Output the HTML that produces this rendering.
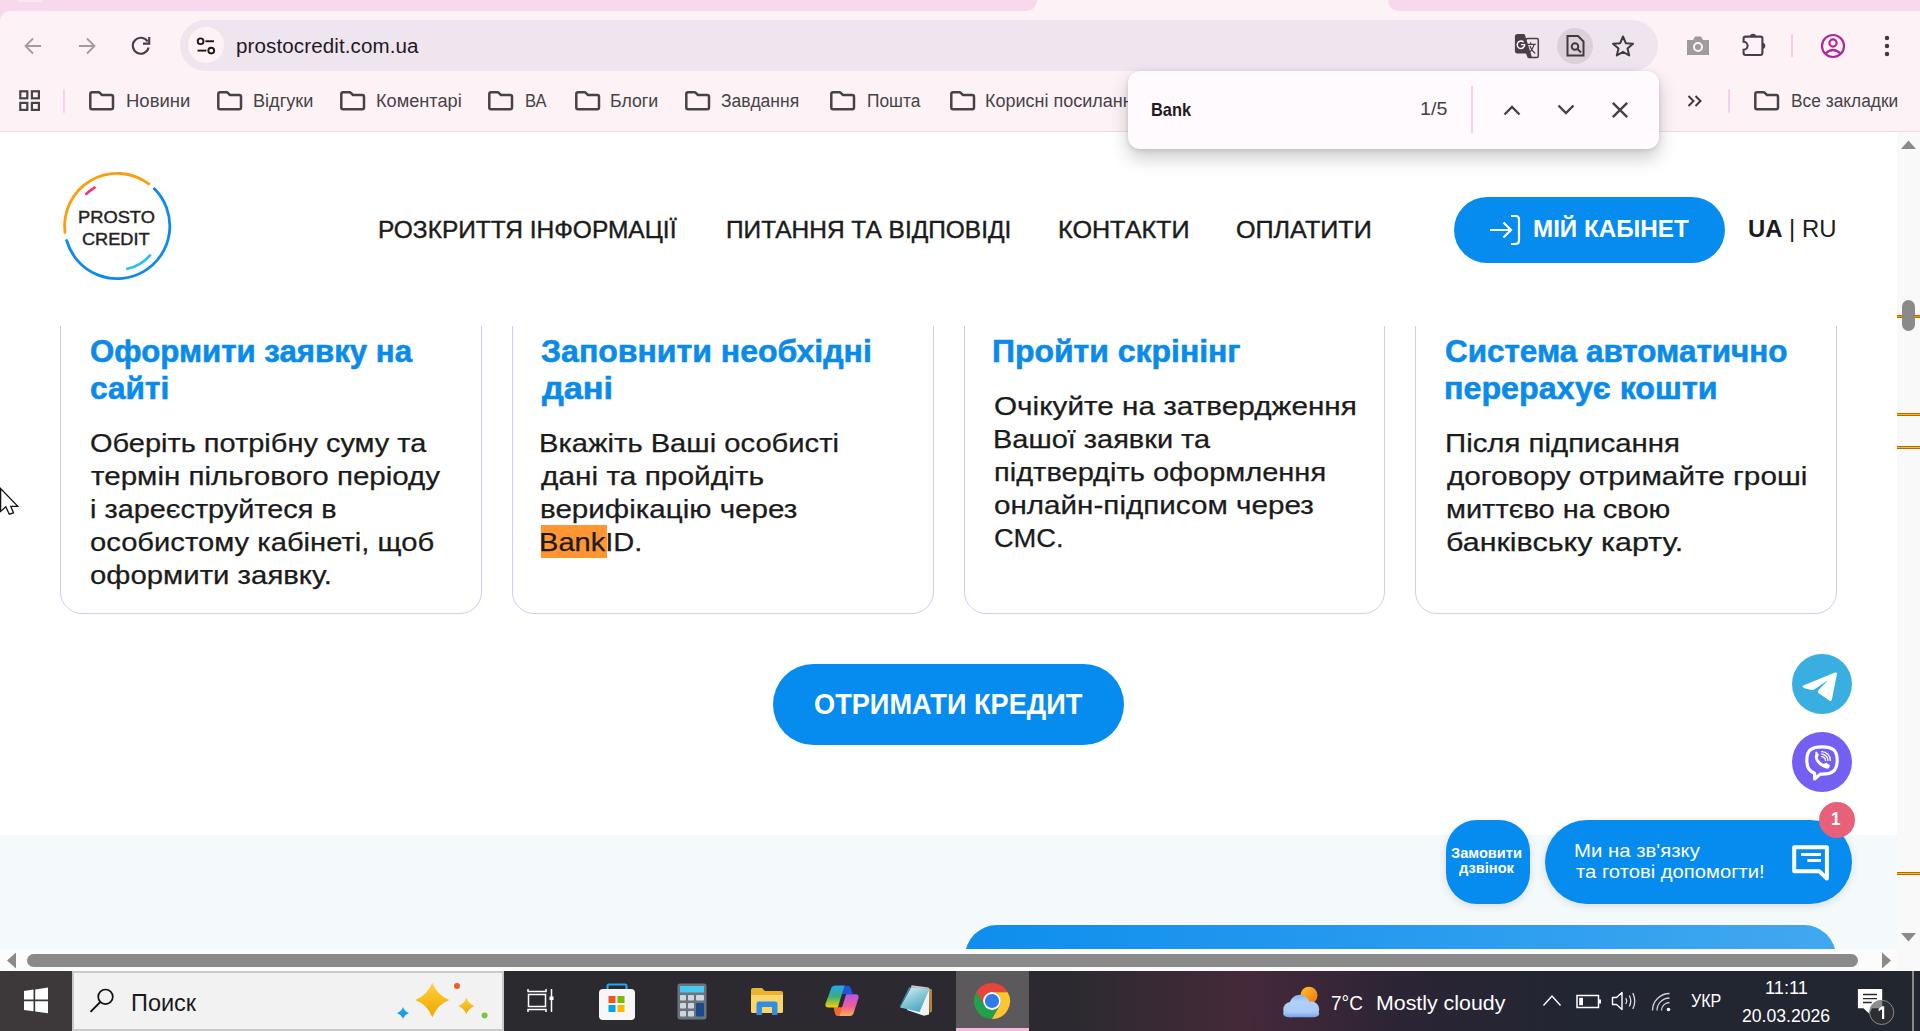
<!DOCTYPE html>
<html><head><meta charset="utf-8">
<style>
*{margin:0;padding:0;box-sizing:border-box}
html,body{width:1920px;height:1031px;overflow:hidden;background:#fff;font-family:"Liberation Sans",sans-serif}
.a{position:absolute}
svg{position:absolute;overflow:visible}
/* chrome */
#tabstrip{left:0;top:0;width:1920px;height:30px;background:#f7d9ee}
#toolbar{left:0;top:11px;width:1920px;height:121px;background:#fdf3f6;border-top-left-radius:10px}
#omni{left:180px;top:20px;width:1478px;height:51px;background:#efe5ee;border-radius:26px}
#siteinfo{left:188px;top:27px;width:36px;height:36px;border-radius:50%;background:#fdf3f6}
#url{left:236px;top:33px;font-size:19.5px;color:#1f1a1f;letter-spacing:0.1px}
.bm{top:91.5px;font-size:18px;color:#474247;white-space:nowrap}
#bmline{left:0;top:131px;width:1920px;height:1px;background:#f0dbe6}
/* web */
#web{left:0;top:132px;width:1897px;height:817px;background:#fff;overflow:hidden}
.nav{top:213px;font-size:24px;color:#1b1b1b;white-space:nowrap}
.card{width:421px;border:1px solid #c9d0f0;border-radius:22px;top:293px;height:321px;background:#fff}
.ct{position:absolute;font-weight:bold;color:#0a8be9;font-size:29px;line-height:37px;white-space:nowrap}
.cb{position:absolute;color:#1b1b1b;font-size:25.5px;line-height:33px;white-space:nowrap}
.ln{position:absolute;white-space:nowrap;transform-origin:0 0}
.hl{background:#ff9632}
</style></head><body>

<!-- ============ CHROME ============ -->
<div id="tabstrip" class="a"></div>
<div class="a" style="left:17px;top:0;width:26px;height:2px;background:#fbe6f3;border-radius:0 0 4px 4px"></div>
<div id="toolbar" class="a"></div>
<!-- active tab -->
<div class="a" style="left:1037px;top:0;width:351px;height:12px;background:#fdf3f6"></div>
<svg style="left:1025px;top:0" width="12" height="12"><path d="M0 11 Q11 11 12 0 L12 12 L0 12Z" fill="#fdf3f6"/></svg>
<svg style="left:1388px;top:0" width="12" height="12"><path d="M12 11 Q1 11 0 0 L0 12 L12 12Z" fill="#fdf3f6"/></svg>

<!-- nav buttons -->
<svg style="left:24px;top:37px" width="18" height="18" viewBox="0 0 18 18"><path d="M17 9H2M9 1.5L1.5 9L9 16.5" stroke="#a39b9f" stroke-width="1.8" fill="none"/></svg>
<svg style="left:78px;top:37px" width="18" height="18" viewBox="0 0 18 18"><path d="M1 9H16M9 1.5L16.5 9L9 16.5" stroke="#a39b9f" stroke-width="1.8" fill="none"/></svg>
<svg style="left:125px;top:30px" width="35" height="32" viewBox="0 0 35 32"><path d="M22.6 11.5A8 8 0 1 0 23.6 17.6" stroke="#4a3a48" stroke-width="2.1" fill="none"/><path d="M18 13.6H24.2V7" stroke="#4a3a48" stroke-width="2.1" fill="none"/></svg>

<div id="omni" class="a"></div>
<div id="siteinfo" class="a"></div>
<svg style="left:196px;top:35px" width="20" height="20" viewBox="0 0 20 20"><circle cx="4.6" cy="6.25" r="2.9" stroke="#1a1a1a" stroke-width="1.9" fill="none"/><path d="M9.4 6.25H18" stroke="#1a1a1a" stroke-width="1.9"/><circle cx="15.25" cy="15.6" r="2.9" stroke="#1a1a1a" stroke-width="1.9" fill="none"/><path d="M1.5 15.6H10.4" stroke="#1a1a1a" stroke-width="1.9"/></svg>
<div class="ln" id="url" style="left:236.23px;top:36.79px;font-size:19.5px;line-height:19.5px;color:#1f1a1f;transform:scaleX(1.0547);">prostocredit.com.ua</div>

<!-- omnibox right icons -->
<svg style="left:1508px;top:28px" width="40" height="34" viewBox="0 0 40 34"><path d="M18.2 12.1Q18.2 10.6 19.7 10.6H28.8Q30.3 10.6 30.3 12.1V28Q30.3 29.5 28.8 29.5H20.5" stroke="#4a3f48" stroke-width="1.5" fill="none"/><path d="M6.9 8.5Q6.9 5.9 9.5 5.9H15.8Q16.6 5.9 16.9 6.8L24.2 29.9H19.8L18 25.4H9.5Q6.9 25.4 6.9 22.8Z" fill="#4a3f48"/><path d="M15.6 14.2A3.7 3.7 0 1 0 16.6 16.6H13" stroke="#fff" stroke-width="1.4" fill="none"/><path d="M19.4 16.3H27.8M22.6 14.2V16.3M26 16.3Q24.6 22 20.6 25M21.9 18Q23.6 22.6 27.2 25.5" stroke="#4a3f48" stroke-width="1.2" fill="none"/></svg>
<div class="a" style="left:1557px;top:28px;width:36px;height:36px;border-radius:50%;background:#dcd0da"></div>
<svg style="left:1565px;top:34px" width="22" height="24" viewBox="0 0 22 24"><path d="M2.5 2H13L18.5 7.5V21.5H2.5Z" stroke="#3f3a3f" stroke-width="2" fill="none"/><circle cx="10" cy="12.5" r="3.3" stroke="#3f3a3f" stroke-width="2" fill="none"/><path d="M12.5 15L16 18.5" stroke="#3f3a3f" stroke-width="2"/></svg>
<svg style="left:1611px;top:34px" width="24" height="24" viewBox="0 0 24 24"><path d="M12 2.5L14.8 9.2L22 9.8L16.5 14.5L18.2 21.5L12 17.8L5.8 21.5L7.5 14.5L2 9.8L9.2 9.2Z" stroke="#3f3a3f" stroke-width="2" fill="none" stroke-linejoin="round"/></svg>

<!-- toolbar right icons -->
<svg style="left:1685px;top:35px" width="26" height="22" viewBox="0 0 26 22"><path d="M2 5H8L10 1.5H16L18 5H24V20H2Z" fill="#9e9a9e"/><circle cx="13" cy="12" r="5" fill="#fdf3f6"/><circle cx="13" cy="12" r="3" fill="#9e9a9e"/></svg>
<svg style="left:1736px;top:28px" width="40" height="34" viewBox="0 0 40 34"><path d="M7.6 10.6Q7.6 8.6 9.6 8.6H24.4Q26.4 8.6 26.4 10.6V25Q26.4 27 24.4 27H9.6Q7.6 27 7.6 25V21.8A4 4 0 0 0 7.6 13.8Z" stroke="#4e3a4a" stroke-width="2.1" fill="none"/><path d="M13.9 8.8A3.1 3.1 0 0 1 20.1 8.8Z M26.2 14.7A3.1 3.1 0 0 1 26.2 20.9Z" fill="#4e3a4a"/></svg>
<div class="a" style="left:1791px;top:34px;width:2px;height:23px;background:#f5cdea"></div>
<svg style="left:1820px;top:33px" width="26" height="26" viewBox="0 0 26 26"><circle cx="13" cy="13" r="11" stroke="#b0269a" stroke-width="2.2" fill="none"/><circle cx="13" cy="10" r="3.6" stroke="#b0269a" stroke-width="2.2" fill="none"/><path d="M5.5 20.5Q13 13.5 20.5 20.5" stroke="#b0269a" stroke-width="2.2" fill="none"/></svg>
<svg style="left:1883px;top:35px" width="8" height="22" viewBox="0 0 8 22"><circle cx="4" cy="3" r="2.2" fill="#3f3a3f"/><circle cx="4" cy="11" r="2.2" fill="#3f3a3f"/><circle cx="4" cy="19" r="2.2" fill="#3f3a3f"/></svg>

<!-- bookmarks bar -->
<svg style="left:19px;top:90px" width="22" height="22" viewBox="0 0 22 22"><g stroke="#474247" stroke-width="2.2" fill="none"><rect x="1.3" y="1.3" width="7" height="7"/><rect x="12.9" y="1.3" width="7" height="7"/><rect x="1.3" y="12.9" width="7" height="7"/><rect x="12.9" y="12.9" width="7" height="7"/></g></svg>
<div class="a" style="left:63px;top:89px;width:2px;height:24px;background:#f8cfef;border-radius:1px"></div>
<svg style="left:89px;top:91px" width="26" height="20" viewBox="0 0 26 20"><path d="M1.3 3Q1.3 1.3 3 1.3H10.2L13 4H22.2Q24 4 24 5.8V16.4Q24 18.2 22.2 18.2H3Q1.3 18.2 1.3 16.4Z" stroke="#474247" stroke-width="2.5" fill="none" stroke-linejoin="round"/></svg>
<div class="ln" id="bm0" style="left:125.72px;top:91.51px;font-size:18px;line-height:18px;color:#474247;transform:scaleX(1.0271);">Новини</div>
<svg style="left:217px;top:91px" width="26" height="20" viewBox="0 0 26 20"><path d="M1.3 3Q1.3 1.3 3 1.3H10.2L13 4H22.2Q24 4 24 5.8V16.4Q24 18.2 22.2 18.2H3Q1.3 18.2 1.3 16.4Z" stroke="#474247" stroke-width="2.5" fill="none" stroke-linejoin="round"/></svg>
<div class="ln" id="bm1" style="left:252.92px;top:91.51px;font-size:18px;line-height:18px;color:#474247;transform:scaleX(1.0070);">Відгуки</div>
<svg style="left:340px;top:91px" width="26" height="20" viewBox="0 0 26 20"><path d="M1.3 3Q1.3 1.3 3 1.3H10.2L13 4H22.2Q24 4 24 5.8V16.4Q24 18.2 22.2 18.2H3Q1.3 18.2 1.3 16.4Z" stroke="#474247" stroke-width="2.5" fill="none" stroke-linejoin="round"/></svg>
<div class="ln" id="bm2" style="left:375.92px;top:91.51px;font-size:18px;line-height:18px;color:#474247;transform:scaleX(1.0097);">Коментарі</div>
<svg style="left:488px;top:91px" width="26" height="20" viewBox="0 0 26 20"><path d="M1.3 3Q1.3 1.3 3 1.3H10.2L13 4H22.2Q24 4 24 5.8V16.4Q24 18.2 22.2 18.2H3Q1.3 18.2 1.3 16.4Z" stroke="#474247" stroke-width="2.5" fill="none" stroke-linejoin="round"/></svg>
<div class="ln" id="bm3" style="left:524.92px;top:91.51px;font-size:18px;line-height:18px;color:#474247;transform:scaleX(0.9198);">ВА</div>
<svg style="left:575px;top:91px" width="26" height="20" viewBox="0 0 26 20"><path d="M1.3 3Q1.3 1.3 3 1.3H10.2L13 4H22.2Q24 4 24 5.8V16.4Q24 18.2 22.2 18.2H3Q1.3 18.2 1.3 16.4Z" stroke="#474247" stroke-width="2.5" fill="none" stroke-linejoin="round"/></svg>
<div class="ln" id="bm4" style="left:610.32px;top:91.51px;font-size:18px;line-height:18px;color:#474247;transform:scaleX(0.9853);">Блоги</div>
<svg style="left:685px;top:91px" width="26" height="20" viewBox="0 0 26 20"><path d="M1.3 3Q1.3 1.3 3 1.3H10.2L13 4H22.2Q24 4 24 5.8V16.4Q24 18.2 22.2 18.2H3Q1.3 18.2 1.3 16.4Z" stroke="#474247" stroke-width="2.5" fill="none" stroke-linejoin="round"/></svg>
<div class="ln" id="bm5" style="left:720.92px;top:91.51px;font-size:18px;line-height:18px;color:#474247;transform:scaleX(0.9720);">Завдання</div>
<svg style="left:830px;top:91px" width="26" height="20" viewBox="0 0 26 20"><path d="M1.3 3Q1.3 1.3 3 1.3H10.2L13 4H22.2Q24 4 24 5.8V16.4Q24 18.2 22.2 18.2H3Q1.3 18.2 1.3 16.4Z" stroke="#474247" stroke-width="2.5" fill="none" stroke-linejoin="round"/></svg>
<div class="ln" id="bm6" style="left:866.92px;top:91.51px;font-size:18px;line-height:18px;color:#474247;transform:scaleX(0.9636);">Пошта</div>
<svg style="left:950px;top:91px" width="26" height="20" viewBox="0 0 26 20"><path d="M1.3 3Q1.3 1.3 3 1.3H10.2L13 4H22.2Q24 4 24 5.8V16.4Q24 18.2 22.2 18.2H3Q1.3 18.2 1.3 16.4Z" stroke="#474247" stroke-width="2.5" fill="none" stroke-linejoin="round"/></svg>
<div class="ln" id="bm7" style="left:984.92px;top:91.51px;font-size:18px;line-height:18px;color:#474247;">Корисні посилання</div>
<div id="bmline" class="a"></div>


<!-- bookmark overflow -->
<svg style="left:1687px;top:95px" width="16" height="12" viewBox="0 0 16 12"><path d="M1.5 1L6.5 6L1.5 11M8.5 1L13.5 6L8.5 11" stroke="#3f3a3f" stroke-width="2" fill="none"/></svg>
<div class="a" style="left:1728px;top:89px;width:2px;height:24px;background:#f8cfef;border-radius:1px"></div>
<svg style="left:1754px;top:91px" width="26" height="20" viewBox="0 0 26 20"><path d="M1.3 3Q1.3 1.3 3 1.3H10.2L13 4H22.2Q24 4 24 5.8V16.4Q24 18.2 22.2 18.2H3Q1.3 18.2 1.3 16.4Z" stroke="#474247" stroke-width="2.5" fill="none" stroke-linejoin="round"/></svg>
<div class="ln" id="bm8" style="left:1790.92px;top:91.51px;font-size:18px;line-height:18px;color:#474247;transform:scaleX(0.9633);">Все закладки</div>

<!-- ============ WEB CONTENT ============ -->
<div id="web" class="a">
 <div class="a" style="left:0;top:703px;width:1897px;height:114px;background:#f4f9fc"></div>
 <div class="a" style="left:965px;top:793px;width:871px;height:120px;border-radius:32px;background:linear-gradient(90deg,#0e8eed,#41a8f0);box-shadow:0 0 0 1.5px #fff"></div>
</div>
<!-- cards (absolute to page) -->
<div class="a card" style="left:60px;width:422px"></div>
<div class="a card" style="left:512px;width:422px"></div>
<div class="a card" style="left:964px;width:421px"></div>
<div class="a card" style="left:1415px;width:422px"></div>

<div class="ln" id="c1t0" style="left:90.09px;top:335.68px;font-size:31.8px;line-height:31.8px;color:#0a8be9;font-weight:bold;transform:scaleX(0.9816);-webkit-text-stroke:0.6px #0a8be9;">Оформити заявку на</div>
<div class="ln" id="c1t1" style="left:90.09px;top:372.68px;font-size:31.8px;line-height:31.8px;color:#0a8be9;font-weight:bold;transform:scaleX(0.9932);-webkit-text-stroke:0.6px #0a8be9;">сайті</div>
<div class="ln" id="c1b0" style="left:90.44px;top:429.99px;font-size:26px;line-height:26px;color:#1b1b1b;transform:scaleX(1.1139);-webkit-text-stroke:0.25px #1b1b1b;">Оберіть потрібну суму та</div>
<div class="ln" id="c1b1" style="left:91.44px;top:462.99px;font-size:26px;line-height:26px;color:#1b1b1b;transform:scaleX(1.1368);-webkit-text-stroke:0.25px #1b1b1b;">термін пільгового періоду</div>
<div class="ln" id="c1b2" style="left:90.44px;top:495.99px;font-size:26px;line-height:26px;color:#1b1b1b;transform:scaleX(1.1091);-webkit-text-stroke:0.25px #1b1b1b;">і зареєструйтеся в</div>
<div class="ln" id="c1b3" style="left:90.44px;top:528.99px;font-size:26px;line-height:26px;color:#1b1b1b;transform:scaleX(1.1220);-webkit-text-stroke:0.25px #1b1b1b;">особистому кабінеті, щоб</div>
<div class="ln" id="c1b4" style="left:90.44px;top:561.99px;font-size:26px;line-height:26px;color:#1b1b1b;transform:scaleX(1.1283);-webkit-text-stroke:0.25px #1b1b1b;">оформити заявку.</div>

<div class="ln" id="c2t0" style="left:540.89px;top:335.68px;font-size:31.8px;line-height:31.8px;color:#0a8be9;font-weight:bold;transform:scaleX(1.0075);-webkit-text-stroke:0.6px #0a8be9;">Заповнити необхідні</div>
<div class="ln" id="c2t1" style="left:541.89px;top:372.68px;font-size:31.8px;line-height:31.8px;color:#0a8be9;font-weight:bold;transform:scaleX(1.0787);-webkit-text-stroke:0.6px #0a8be9;">дані</div>
<div class="a" style="left:541px;top:525px;width:66px;height:33px;background:#ff9632"></div>
<div class="ln" id="c2b0" style="left:539.24px;top:429.99px;font-size:26px;line-height:26px;color:#1b1b1b;transform:scaleX(1.1212);-webkit-text-stroke:0.25px #1b1b1b;">Вкажіть Ваші особисті</div>
<div class="ln" id="c2b1" style="left:541.24px;top:462.99px;font-size:26px;line-height:26px;color:#1b1b1b;transform:scaleX(1.1485);-webkit-text-stroke:0.25px #1b1b1b;">дані та пройдіть</div>
<div class="ln" id="c2b2" style="left:540.24px;top:495.99px;font-size:26px;line-height:26px;color:#1b1b1b;transform:scaleX(1.1378);-webkit-text-stroke:0.25px #1b1b1b;">верифікацію через</div>
<div class="ln" id="c2b3" style="left:539.24px;top:528.99px;font-size:26px;line-height:26px;color:#1b1b1b;transform:scaleX(1.1185);-webkit-text-stroke:0.25px #1b1b1b;">BankID.</div>

<div class="ln" id="c3t0" style="left:992.49px;top:335.68px;font-size:31.8px;line-height:31.8px;color:#0a8be9;font-weight:bold;transform:scaleX(1.0045);-webkit-text-stroke:0.6px #0a8be9;">Пройти скрінінг</div>
<div class="ln" id="c3b0" style="left:993.84px;top:392.99px;font-size:26px;line-height:26px;color:#1b1b1b;transform:scaleX(1.1429);-webkit-text-stroke:0.25px #1b1b1b;">Очікуйте на затвердження</div>
<div class="ln" id="c3b1" style="left:992.84px;top:425.99px;font-size:26px;line-height:26px;color:#1b1b1b;transform:scaleX(1.1134);-webkit-text-stroke:0.25px #1b1b1b;">Вашої заявки та</div>
<div class="ln" id="c3b2" style="left:993.84px;top:458.99px;font-size:26px;line-height:26px;color:#1b1b1b;transform:scaleX(1.1164);-webkit-text-stroke:0.25px #1b1b1b;">підтвердіть оформлення</div>
<div class="ln" id="c3b3" style="left:993.84px;top:491.99px;font-size:26px;line-height:26px;color:#1b1b1b;transform:scaleX(1.1391);-webkit-text-stroke:0.25px #1b1b1b;">онлайн-підписом через</div>
<div class="ln" id="c3b4" style="left:993.84px;top:524.99px;font-size:26px;line-height:26px;color:#1b1b1b;transform:scaleX(1.0510);-webkit-text-stroke:0.25px #1b1b1b;">СМС.</div>

<div class="ln" id="c4t0" style="left:1445.29px;top:335.68px;font-size:31.8px;line-height:31.8px;color:#0a8be9;font-weight:bold;transform:scaleX(0.9882);-webkit-text-stroke:0.6px #0a8be9;">Система автоматично</div>
<div class="ln" id="c4t1" style="left:1444.29px;top:372.68px;font-size:31.8px;line-height:31.8px;color:#0a8be9;font-weight:bold;transform:scaleX(1.0137);-webkit-text-stroke:0.6px #0a8be9;">перерахує кошти</div>
<div class="ln" id="c4b0" style="left:1444.64px;top:429.99px;font-size:26px;line-height:26px;color:#1b1b1b;transform:scaleX(1.1307);-webkit-text-stroke:0.25px #1b1b1b;">Після підписання</div>
<div class="ln" id="c4b1" style="left:1446.64px;top:462.99px;font-size:26px;line-height:26px;color:#1b1b1b;transform:scaleX(1.1427);-webkit-text-stroke:0.25px #1b1b1b;">договору отримайте гроші</div>
<div class="ln" id="c4b2" style="left:1445.64px;top:495.99px;font-size:26px;line-height:26px;color:#1b1b1b;transform:scaleX(1.1146);-webkit-text-stroke:0.25px #1b1b1b;">миттєво на свою</div>
<div class="ln" id="c4b3" style="left:1445.64px;top:528.99px;font-size:26px;line-height:26px;color:#1b1b1b;transform:scaleX(1.1719);-webkit-text-stroke:0.25px #1b1b1b;">банківську карту.</div>

<!-- sticky header -->
<div class="a" style="left:0;top:132px;width:1897px;height:194px;background:#fff"></div>
<svg style="left:60px;top:169px" width="115" height="115" viewBox="0 0 115 115">
 <g fill="none" stroke-linecap="round"><path d="M4.99 63.41A52.60 52.60 0 0 1 88.86 14.99" stroke="#fb9d10" stroke-width="2.8"/><path d="M94.39 19.81A52.60 52.60 0 1 1 6.64 71.50" stroke="#0b8bee" stroke-width="2.8"/><path d="M26.29 24.99A44.50 44.50 0 0 1 34.61 18.66" stroke="#f2336d" stroke-width="2.6"/><path d="M90.05 86.27A44.00 44.00 0 0 1 67.25 99.84" stroke="#1ec6ea" stroke-width="2.6"/></g>
</svg>
<div class="ln" id="logo0" style="left:77.78px;top:208.61px;font-size:17px;line-height:17px;color:#222;transform:scaleX(1.0764);-webkit-text-stroke:0.4px #222;">PROSTO</div>
<div class="ln" id="logo1" style="left:82.38px;top:230.61px;font-size:17px;line-height:17px;color:#222;transform:scaleX(1.0685);-webkit-text-stroke:0.4px #222;">CREDIT</div>

<div class="ln" id="nav0" style="left:377.56px;top:217.68px;font-size:24px;line-height:24px;color:#1b1b1b;transform:scaleX(1.0206);-webkit-text-stroke:0.4px #1b1b1b;">РОЗКРИТТЯ ІНФОРМАЦІЇ</div>
<div class="ln" id="nav1" style="left:725.76px;top:217.68px;font-size:24px;line-height:24px;color:#1b1b1b;transform:scaleX(1.0189);-webkit-text-stroke:0.4px #1b1b1b;">ПИТАННЯ ТА ВІДПОВІДІ</div>
<div class="ln" id="nav2" style="left:1057.56px;top:217.68px;font-size:24px;line-height:24px;color:#1b1b1b;transform:scaleX(1.0485);-webkit-text-stroke:0.4px #1b1b1b;">КОНТАКТИ</div>
<div class="ln" id="nav3" style="left:1235.56px;top:217.68px;font-size:24px;line-height:24px;color:#1b1b1b;transform:scaleX(1.0469);-webkit-text-stroke:0.4px #1b1b1b;">ОПЛАТИТИ</div>

<div class="a" style="left:1454px;top:197px;width:271px;height:66px;border-radius:33px;background:#068cee"></div>
<svg style="left:1488px;top:214px" width="34" height="32" viewBox="0 0 34 32"><path d="M2 16H23M15.5 8.5L23 16L15.5 23.5" stroke="#fff" stroke-width="2.2" fill="none"/><path d="M23 2H27.5Q31 2 31 5.5V26.5Q31 30 27.5 30H23" stroke="#fff" stroke-width="2.2" fill="none"/></svg>
<div class="ln" id="btn" style="left:1532.53px;top:217.26px;font-size:24.5px;line-height:24.5px;color:#fff;font-weight:bold;transform:scaleX(0.9872);">МІЙ КАБІНЕТ</div>
<div class="ln" id="lang" style="left:1748.39px;top:217.61px;font-size:23.5px;line-height:23.5px;color:#1b1b1b;transform:scaleX(1.0154);"><b>UA</b> | RU</div>

<!-- CTA -->
<div class="a" style="left:773px;top:664px;width:351px;height:81px;border-radius:40.5px;background:#068cee"></div>
<div class="ln" id="cta" style="left:813.86px;top:690.45px;font-size:29px;line-height:29px;color:#fff;font-weight:bold;transform:scaleX(0.9372);">ОТРИМАТИ КРЕДИТ</div>

<!-- floating widgets -->
<div class="a" style="left:1792px;top:654px;width:60px;height:60px;border-radius:50%;background:#38aee1"></div>
<svg style="left:1792px;top:654px" width="60" height="60" viewBox="0 0 60 60"><path d="M11.2 31.6Q9.6 33 12.5 34.3L19.2 35.9Q21 36.3 23 35L36.2 26L26.3 36.3Q25 37.8 26.8 39.2L37.2 46.5Q39.3 47.9 39.9 45.5L44.9 20.2Q45.3 17.8 43 18.6Z" fill="#fff"/></svg>
<div class="a" style="left:1792px;top:732px;width:60px;height:60px;border-radius:50%;background:#7360f2"></div>
<svg style="left:1792px;top:732px" width="60" height="60" viewBox="0 0 60 60"><path d="M30 14.8C20 14.8 14.8 17.8 14.8 28.2C14.8 35.5 17.3 39.5 22.6 41.3V47L28.3 42.1C28.9 42.1 29.4 42.1 30 42.1C40 42.1 45.2 39 45.2 28.2C45.2 17.8 40 14.8 30 14.8Z" stroke="#fff" stroke-width="3.2" fill="none" stroke-linejoin="round"/><path d="M23.4 22.4Q21.6 26 25.3 30.8Q29.3 35.6 34.6 36.6Q36.2 36.9 37.2 35.4L37.8 34.4Q38.2 33.5 37.2 32.8L34.6 31Q33.6 30.4 32.8 31.3L32 32.1Q29.5 31.4 27.6 29Q25.7 26.6 25.6 24.9L26.4 24.1Q27.2 23.2 26.6 22.3L24.9 19.9Q24.1 19.2 23.4 20.2Z" fill="#fff"/><path d="M29.7 24.6A3.8 3.8 0 0 1 33.5 28.4M29.7 22.2A6.2 6.2 0 0 1 35.9 28.4M29.7 19.7A8.7 8.7 0 0 1 38.4 28.4" stroke="#fff" stroke-width="1.3" fill="none" stroke-linecap="round"/></svg>

<div class="a" style="left:1446px;top:820px;width:84px;height:84px;border-radius:31px;background:#068cee;box-shadow:0 2px 8px rgba(0,0,0,0.12)"></div>
<div class="ln" id="zam0" style="left:1451.13px;top:846.43px;font-size:14.5px;line-height:14.5px;color:#fff;font-weight:bold;transform:scaleX(1.0088);">Замовити</div>
<div class="ln" id="zam1" style="left:1459.13px;top:861.13px;font-size:14.5px;line-height:14.5px;color:#fff;font-weight:bold;transform:scaleX(1.0095);">дзвінок</div>
<div class="a" style="left:1545px;top:820px;width:307px;height:84px;border-radius:42px;background:#068cee;box-shadow:0 2px 8px rgba(0,0,0,0.12)"></div>
<div class="ln" id="chat0" style="left:1573.89px;top:842.14px;font-size:18.5px;line-height:18.5px;color:#fff;transform:scaleX(1.1000);">Ми на зв'язку</div>
<div class="ln" id="chat1" style="left:1575.89px;top:862.54px;font-size:18.5px;line-height:18.5px;color:#fff;transform:scaleX(1.0930);">та готові допомогти!</div>
<svg style="left:1790px;top:843px" width="42" height="40" viewBox="0 0 42 40"><path d="M4.2 4.3H36.9V35.6L29.3 28.2H4.2Z" stroke="#fff" stroke-width="4" fill="none" stroke-linejoin="round"/><path d="M11 11.6H31M17.4 17.4H31" stroke="#fff" stroke-width="3"/></svg>
<div class="a" style="left:1819px;top:802px;width:36px;height:36px;border-radius:50%;background:#e9607a"></div>
<div class="ln" id="badge" style="left:1831.32px;top:810.26px;font-size:18px;line-height:18px;color:#fff;font-weight:bold;transform:scaleX(0.9459);">1</div>

<!-- mouse cursor -->
<svg style="left:0;top:488px" width="20" height="30" viewBox="0 0 20 30"><path d="M0.6 0.6V23.4L5.8 18.8L9.3 26.2L13.5 24.8L10.8 18.4H17.8Z" fill="#fff" stroke="#111" stroke-width="1.3" stroke-linejoin="miter"/></svg>

<!-- vertical scrollbar -->
<div class="a" style="left:1897px;top:132px;width:23px;height:839px;background:#f9f9f9"></div>
<svg style="left:1897px;top:132px" width="23" height="839"><path d="M4 17L11.5 8.5L19 17Z" fill="#8a8a8a"/><path d="M4 801L11.5 809.5L19 801Z" fill="#8a8a8a"/></svg>
<div class="a" style="left:1897px;top:315px;width:23px;height:3px;background:#e8a200;border-top:1px solid #b8680a;border-bottom:1px solid #b8680a"></div>
<div class="a" style="left:1897px;top:413px;width:23px;height:3px;background:#f2c100;border-top:1px solid #b8680a;border-bottom:1px solid #b8680a"></div>
<div class="a" style="left:1897px;top:446px;width:23px;height:3px;background:#f2c100;border-top:1px solid #b8680a;border-bottom:1px solid #b8680a"></div>
<div class="a" style="left:1897px;top:872px;width:23px;height:3px;background:#f2c100;border-top:1px solid #b8680a;border-bottom:1px solid #b8680a"></div>
<div class="a" style="left:1902px;top:300px;width:13px;height:31px;border-radius:6.5px;background:#8a8a8a"></div>

<!-- horizontal scrollbar -->
<div class="a" style="left:0;top:949px;width:1897px;height:22px;background:#fcfcfc"></div>
<svg style="left:0;top:949px" width="1897" height="22"><path d="M16 3.5L7 11.5L16 19.5Z" fill="#8a8a8a"/><path d="M1882 3.5L1891 11.5L1882 19.5Z" fill="#8a8a8a"/></svg>
<div class="a" style="left:27px;top:954px;width:1831px;height:13px;border-radius:6.5px;background:#8a8a8a"></div>


<!-- find bar -->
<div class="a" style="left:1128px;top:71px;width:531px;height:78px;border-radius:12px;background:#fffafd;box-shadow:0 9px 18px rgba(40,40,45,0.24),0 1px 4px rgba(40,40,45,0.14)"></div>
<div class="ln" id="find0" style="left:1150.86px;top:99.92px;font-size:19px;line-height:19px;color:#1f1a1f;font-weight:bold;transform:scaleX(0.8628);">Bank</div>
<div class="ln" id="find1" style="left:1419.89px;top:100.34px;font-size:18.5px;line-height:18.5px;color:#474247;transform:scaleX(1.0637);">1/5</div>
<div class="a" style="left:1471px;top:86px;width:2px;height:47px;background:#f8cfef"></div>
<svg style="left:1500px;top:100px" width="24" height="20" viewBox="0 0 24 20"><path d="M4.5 14.5L12 7L19.5 14.5" stroke="#474247" stroke-width="2.4" fill="none"/></svg>
<svg style="left:1554px;top:100px" width="24" height="20" viewBox="0 0 24 20"><path d="M4.5 5.5L12 13L19.5 5.5" stroke="#474247" stroke-width="2.4" fill="none"/></svg>
<svg style="left:1608px;top:98px" width="24" height="24" viewBox="0 0 24 24"><path d="M4.8 4.8L19.2 19.2M19.2 4.8L4.8 19.2" stroke="#474247" stroke-width="2.4" fill="none"/></svg>

<!-- ============ TASKBAR ============ -->
<div class="a" style="left:0;top:971px;width:1920px;height:60px;background:linear-gradient(90deg,#2b2a2f 0%,#2c2a30 56%,#46293a 65%,#2b2434 73%,#222632 82%,#22262f 100%)"></div>
<div class="a" style="left:0;top:971px;width:72px;height:60px;background:#3d393b"></div>
<svg style="left:23px;top:987px" width="26" height="27" viewBox="0 0 26 27"><path d="M1 4L10.5 2.6V12.6H1Z M12.2 2.4L25 0.6V12.6H12.2Z M1 14.2H10.5V24.3L1 23Z M12.2 14.2H25V26.3L12.2 24.5Z" fill="#fff"/></svg>
<div class="a" style="left:72px;top:971px;width:432px;height:60px;background:#f2f2f2;border-left:2px solid #c9c9c9;border-top:2px solid #c9c9c9;border-right:2px solid #c9c9c9;border-bottom:2px solid #c9c9c9"></div>
<svg style="left:88px;top:986px" width="28" height="30" viewBox="0 0 28 30"><circle cx="17.5" cy="10.8" r="7.3" stroke="#111" stroke-width="1.7" fill="none"/><path d="M12.3 16L2.5 25.8" stroke="#111" stroke-width="1.9"/></svg>
<div class="ln" id="poisk" style="left:131.02px;top:991.53px;font-size:23px;line-height:23px;color:#1a1a1a;transform:scaleX(1.0211);">Поиск</div>
<!-- sparkles -->
<svg style="left:390px;top:980px" width="110" height="45" viewBox="0 0 110 45">
 <defs><linearGradient id="gs" x1="0" y1="0" x2="0" y2="1"><stop offset="0" stop-color="#ffd23a"/><stop offset="1" stop-color="#f0a500"/></linearGradient></defs>
 <path d="M42.30 2.80Q47.06 15.18 59.30 20.00Q47.06 24.82 42.30 37.20Q37.54 24.82 25.30 20.00Q37.54 15.18 42.30 2.80Z" fill="url(#gs)"/>
 <path d="M76.40 17.70Q78.64 23.68 84.40 26.00Q78.64 28.32 76.40 34.30Q74.16 28.32 68.40 26.00Q74.16 23.68 76.40 17.70Z" fill="url(#gs)"/>
 <path d="M13.00 27.00Q14.50 31.50 19.00 33.00Q14.50 34.50 13.00 39.00Q11.50 34.50 7.00 33.00Q11.50 31.50 13.00 27.00Z" fill="#1a9ff0"/>
 <circle cx="67" cy="6" r="3" fill="#f25b22"/>
 <circle cx="94.6" cy="35.4" r="3" fill="#7cc140"/>
</svg>
<!-- task view -->
<svg style="left:527px;top:988px" width="26" height="25" viewBox="0 0 26 25"><g stroke="#fff" stroke-width="1.5" fill="none"><path d="M1 1V3.5H19V1M1 24V21.5H19V24"/><rect x="1.5" y="6.5" width="17" height="12"/><path d="M24.5 1V24"/></g><rect x="22.5" y="8.5" width="4" height="3.5" fill="#fff"/></svg>
<!-- store -->
<svg style="left:598px;top:983px" width="38" height="37" viewBox="0 0 38 37"><path d="M9.5 8V3Q9.5 1.5 11 1.5H27Q28.5 1.5 28.5 3V8" stroke="#27a6e8" stroke-width="2.2" fill="none"/><rect x="1" y="6" width="36" height="31" rx="4" fill="#f7f7f7"/><rect x="10.5" y="13" width="7" height="7" fill="#f15422"/><rect x="19.5" y="13" width="7" height="7" fill="#7fb900"/><rect x="10.5" y="22" width="7" height="7" fill="#00a3ee"/><rect x="19.5" y="22" width="7" height="7" fill="#ffb800"/></svg>
<!-- calculator -->
<svg style="left:677px;top:983px" width="30" height="37" viewBox="0 0 30 37"><rect x="0.5" y="0.5" width="29" height="36" rx="2.5" fill="#6a747e"/><rect x="3" y="3" width="24" height="6.5" fill="#47c8f0"/><g fill="#d0d6dc"><rect x="3" y="12" width="6" height="5.5" rx="1"/><rect x="11" y="12" width="6" height="5.5" rx="1"/><rect x="19" y="12" width="8" height="5.5" rx="1"/><rect x="3" y="20" width="6" height="5.5" rx="1"/><rect x="11" y="20" width="6" height="5.5" rx="1"/><rect x="3" y="28" width="6" height="5.5" rx="1"/><rect x="11" y="28" width="6" height="5.5" rx="1"/></g><rect x="19" y="20" width="8" height="13.5" rx="1" fill="#1a4a8a"/></svg>
<!-- explorer -->
<svg style="left:750px;top:987px" width="34" height="29" viewBox="0 0 34 29"><path d="M1 3Q1 1 3 1H12L15 4H31Q33 4 33 6V24Q33 26 31 26H3Q1 26 1 24Z" fill="#e8b432"/><path d="M1 8H33V24Q33 26 31 26H3Q1 26 1 24Z" fill="#fcd468"/><path d="M6.5 28V17Q6.5 14.5 9 14.5H25Q27.5 14.5 27.5 17V28H22V20H12V28Z" fill="#2e8ee6"/></svg>
<!-- copilot -->
<svg style="left:820px;top:980px" width="44" height="42" viewBox="0 0 44 42"><defs><linearGradient id="cpa" x1="0" y1="0" x2="0" y2="1"><stop offset="0" stop-color="#20a8f4"/><stop offset="0.5" stop-color="#3cae7a"/><stop offset="1" stop-color="#f6d200"/></linearGradient><linearGradient id="cpb" x1="0" y1="0" x2="0" y2="1"><stop offset="0" stop-color="#b058ec"/><stop offset="0.55" stop-color="#f25a9a"/><stop offset="1" stop-color="#ffb04a"/></linearGradient></defs>
<path d="M22.5 5.8H28Q30 5.8 31 8.5L32.8 14H21Z" fill="#1f55d6"/>
<path d="M13.5 27.3H23L19.6 36H17.8Q15.8 36 15 33.5Z" fill="#f26a30"/>
<path d="M11.5 7.5Q12.8 5.6 15.5 5.6H24.5L17.8 27.5H8.5Q4.6 27.5 5.6 23.5Z" fill="url(#cpa)"/>
<path d="M26.2 14.3H35.5Q39.4 14.3 38.4 18.3L33.4 33.8Q32.6 36 29.8 36H19.4Z" fill="url(#cpb)"/></svg>
<!-- notepad -->
<svg style="left:894px;top:980px" width="44" height="42" viewBox="0 0 44 42"><defs><linearGradient id="npb" x1="0" y1="0" x2="0.6" y2="1"><stop offset="0" stop-color="#e6f6fa"/><stop offset="0.5" stop-color="#8ccbd8"/><stop offset="1" stop-color="#4aa8c0"/></linearGradient></defs>
<path d="M35.5 8.5L38 9.5V31.5L35.5 33Z" fill="#b8862a"/>
<path d="M17 7.5L35.5 9L35 34.5L30 35.8L13 30Z" fill="#eef2f4"/>
<path d="M17 7.5L35.5 9L25.5 32L6 27.5Z" fill="url(#npb)"/>
<path d="M6 27.5L17 7.5L15 7.2L5.8 26.5Z" fill="#3a8aa8"/>
<path d="M17.5 5.2L34.5 7.6L35.5 9L17 7.5Z" fill="#c8ccd0"/></svg>
<!-- chrome active -->
<div class="a" style="left:956px;top:971px;width:73px;height:60px;background:#5c595c"></div>
<div class="a" style="left:956px;top:1028px;width:73px;height:3px;background:#f6b9de"></div>
<svg style="left:974px;top:983px" width="36" height="36" viewBox="0 0 36 36"><path d="M18 9.2L33.7 9.2A18 18 0 0 0 2.53 8.8L10.38 22.4A8.8 8.8 0 0 1 18 9.2Z" fill="#e8453a"/><path d="M18 9.2L33.7 9.2A18 18 0 0 1 17.77 36L25.62 22.4A8.8 8.8 0 0 0 18 9.2Z" fill="#fcc62e"/><path d="M10.38 22.4L2.53 8.8A18 18 0 0 0 17.77 36L25.62 22.4A8.8 8.8 0 0 1 10.38 22.4Z" fill="#22a04a"/><circle cx="18" cy="18" r="8.9" fill="#fff"/><circle cx="18" cy="18" r="7.1" fill="#2f7be8"/></svg>
<!-- weather -->
<svg style="left:1281px;top:986px" width="40" height="33" viewBox="0 0 40 33"><defs><linearGradient id="sun" x1="0" y1="0" x2="1" y2="1"><stop offset="0" stop-color="#ffc426"/><stop offset="1" stop-color="#f2700e"/></linearGradient><linearGradient id="cl" gradientUnits="userSpaceOnUse" x1="0" y1="9" x2="0" y2="31.5"><stop offset="0" stop-color="#8ab4f4"/><stop offset="0.3" stop-color="#b2d0fa"/><stop offset="0.75" stop-color="#aac9f6"/><stop offset="1" stop-color="#6e9ff0"/></linearGradient></defs><circle cx="28" cy="9.2" r="8.5" fill="url(#sun)"/><g fill="url(#cl)"><circle cx="18.7" cy="19.3" r="10.5"/><circle cx="30.4" cy="23.2" r="7.8"/><circle cx="9.8" cy="23.7" r="7.6"/><rect x="2.2" y="24" width="36" height="7.3" rx="6"/></g></svg>
<div class="ln" id="w0" style="left:1330.74px;top:991.72px;font-size:21px;line-height:21px;color:#fff;transform:scaleX(0.9066);">7°C</div>
<div class="ln" id="w1" style="left:1376.14px;top:991.72px;font-size:21px;line-height:21px;color:#fff;transform:scaleX(1.0167);">Mostly cloudy</div>
<svg style="left:1542px;top:994px" width="20" height="13" viewBox="0 0 20 13"><path d="M1.5 11.5L10 2L18.5 11.5" stroke="#fff" stroke-width="1.4" fill="none"/></svg>
<svg style="left:1576px;top:994px" width="26" height="15" viewBox="0 0 26 15"><rect x="1" y="1.5" width="21.5" height="12" stroke="#fff" stroke-width="1.5" fill="none"/><rect x="3.2" y="3.8" width="3.8" height="7.4" fill="#fff"/><rect x="23" y="5.5" width="2" height="4" fill="#fff"/></svg>
<svg style="left:1611px;top:991px" width="26" height="20" viewBox="0 0 26 20"><path d="M1.5 6.5H5.5L11 1.5V18.5L5.5 13.5H1.5Z" stroke="#fff" stroke-width="1.4" fill="none" stroke-linejoin="round"/><path d="M15 7.5Q16.5 10 15 12.5M18.5 5Q21 10 18.5 15M22 2.5Q25.5 10 22 17.5" stroke="#fff" stroke-width="1.3" fill="none" stroke-linecap="round" opacity="0.85"/></svg>
<svg style="left:1651px;top:992px" width="22" height="20" viewBox="0 0 22 20"><path d="M1.5 18.5A17 17 0 0 1 18.5 1.5M6 18.5A12.5 12.5 0 0 1 18.5 6M10.5 18.5A8 8 0 0 1 18.5 10.5" stroke="#fff" stroke-width="1.3" fill="none" opacity="0.8"/><circle cx="17.5" cy="17.5" r="1.8" fill="#fff"/></svg>
<div class="ln" id="ukr" style="left:1690.92px;top:992.36px;font-size:18px;line-height:18px;color:#fff;transform:scaleX(0.8947);">УКР</div>
<div class="ln" id="cl0" style="left:1764.52px;top:978.76px;font-size:18px;line-height:18px;color:#fff;transform:scaleX(1.0126);">11:11</div>
<div class="ln" id="cl1" style="left:1742.32px;top:1006.56px;font-size:18px;line-height:18px;color:#fff;transform:scaleX(0.9787);">20.03.2026</div>
<svg style="left:1856px;top:987px" width="40" height="40" viewBox="0 0 40 40"><path d="M1.9 1.9H26.2V21.2H16L13.3 26.7L7.4 21.2H1.9Z" fill="#fff"/><path d="M7 7.5H21M7 11.6H21M7 15.5H15.8" stroke="#2b2b2b" stroke-width="1.4"/><circle cx="25.7" cy="25.4" r="12.1" fill="rgba(54,54,56,0.56)" stroke="#8a8a8a" stroke-width="1"/><path d="M26 19.2H28.2V32.1H26V22.3L22.6 24.2V21.8Z" fill="#fff"/></svg>
<div class="a" style="left:1912px;top:971px;width:2px;height:60px;background:#8a8a8a"></div>

</body></html>
